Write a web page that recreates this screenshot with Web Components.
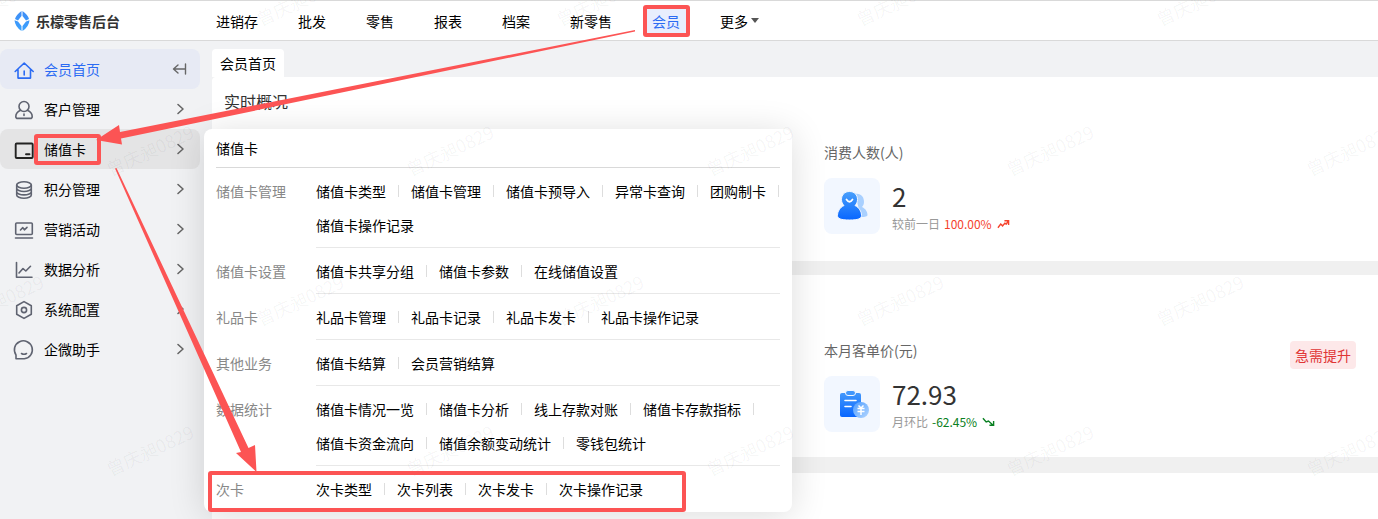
<!DOCTYPE html>
<html lang="zh-CN">
<head>
<meta charset="utf-8">
<title>乐檬零售后台</title>
<style>
html,body{margin:0;height:100%}
body{font:14px/22px "Noto Sans CJK SC","Noto Sans",sans-serif;color:#000;background:#f1f2f4;overflow:hidden}
</style>
</head>
<body>
<retail-app></retail-app>
<script>
function define(name, html, setup) {
  const t = document.createElement('template');
  t.innerHTML = html;
  customElements.define(name, class extends HTMLElement {
    constructor() {
      super();
      this.attachShadow({mode: 'open'}).append(t.content.cloneNode(true));
    }
    connectedCallback() { if (setup) setup(this, this.shadowRoot); }
  });
}

const ICONS = {
  home: '<path d="M5 10.500v8.600h12.500v-8.600M2.200 12.500 11.200 4l9 8.500M11.200 12v4" />',
  user: '<circle cx="11" cy="7.500" r="5"/><path d="M7.700 11.300C4.300 12.800 2.800 15 2.800 17.400c0 1.200.7 2 2 2h12.400c1.300 0 2-.8 2-2 0-2.400-1.500-4.600-4.900-6.100M11 15v1.500"/>',
  card: '<rect x="2.700" y="4.500" width="17" height="14.500" rx="1" stroke-width="1.900"/><path d="M13 15.300h3.500" stroke-width="1.900"/>',
  coins: '<ellipse cx="11" cy="6" rx="7.300" ry="3.200"/><path d="M3.700 6v10c0 1.800 3.300 3.200 7.300 3.200s7.300-1.400 7.300-3.200V6M3.700 9.300c0 1.800 3.300 3.200 7.300 3.200s7.300-1.400 7.300-3.200M3.700 12.700c0 1.800 3.300 3.200 7.300 3.200s7.300-1.400 7.300-3.200"/>',
  screen: '<rect x="2.700" y="4" width="16.600" height="11.500" rx="1"/><path d="M2.500 19h17M7.500 11l2.300-2.400 1.600 2.200L14 8.300"/>',
  chart: '<path d="M3.500 3.500v14.700h15.500M6 14l4-4.500 2.800 2.500 4.700-4.700"/>',
  hex: '<path d="M11 2.600 18.300 6.800v8.400L11 19.400 3.700 15.200V6.800Z"/><circle cx="11" cy="11" r="2.600"/>',
  chat: '<path d="M3 19.800V16a9 9 0 1 1 8.300 3.800H3M8.500 14.500c1.600 1 3.400 1 5 0"/>'
};

define('brand-logo', `
<style>
:host{display:flex;align-items:center;gap:6px;color:#333;font-weight:700}
svg{width:16px;height:20px}
</style>
<svg viewBox="0 0 16 20" aria-hidden="true"><defs><linearGradient id="g" x1="0" y1="0" x2="0" y2="1"><stop offset="0" stop-color="#3f8cf5"/><stop offset="1" stop-color="#3aa2ff"/></linearGradient></defs>
<path fill="url(#g)" d="M7.500 0v5L4 9.500 1 8Q2 4 7.500 0ZM8.500 0v5L12 9.500 15 8Q14 4 8.500 0ZM.5 9.200 4 10.500 7.500 15v5Q1 15.500.5 9.200ZM15.500 9.200 12 10.500 8.500 15v5q6.500-4.500 7-10.800Z"/></svg>
<slot></slot>`);

define('top-bar', `
<style>
:host{display:flex;align-items:center;box-sizing:border-box;height:41px;background:#fff;border-top:1px solid #d9d9d9;border-bottom:1px solid #d9d9d9}
brand-logo{flex:0 0 192px;padding-left:14px;box-sizing:border-box}
nav{display:flex;gap:28px;padding-left:18px}
a{display:flex;align-items:center;padding:2px 6px;color:#000;text-decoration:none;white-space:nowrap}
a[aria-current]{color:#2b6bf3;background:#e8eefd}
i{margin-left:3px;border:4px solid transparent;border-top:5px solid #555;border-bottom:0}
</style>
<brand-logo>乐檬零售后台</brand-logo><nav></nav>`, (el, root) => {
  root.querySelector('nav').innerHTML = ['进销存','批发','零售','报表','档案','新零售','会员','更多'].map(n =>
    `<a href="#"${n === '会员' ? ' aria-current="page"' : ''}>${n}${n === '更多' ? '<i></i>' : ''}</a>`).join('');
});

define('side-item', `
<style>
:host{display:block}
a{display:flex;align-items:center;height:40px;padding:0 12px;border-radius:8px;color:#000;text-decoration:none}
svg{fill:none;stroke:#5f6370;stroke-width:1.600;stroke-linecap:round;stroke-linejoin:round}
.icon{width:24px;height:24px;margin-right:8px}
.more{width:16px;height:16px;margin-left:auto;stroke:#666}
:host([active]) a{background:#e7eaf4;color:#2b6bf3}
:host([active]) .icon{stroke:#2b6bf3}
:host([open]) a{background:#e4e4e5}
:host([open]) .icon{stroke:#222}
</style>
<a href="#"><svg class="icon" viewBox="-1 -2 24 24" aria-hidden="true"></svg><slot></slot><svg class="more" viewBox="0 0 16 16" aria-hidden="true"></svg></a>`, (el, root) => {
  root.querySelector('.icon').innerHTML = ICONS[el.getAttribute('icon')];
  root.querySelector('.more').innerHTML = el.hasAttribute('active')
    ? '<path d="M13.500 3v10M1.500 8h12M6 4l-4.500 4L6 12" stroke-width="1.400"/>' : '<path d="M6 3.500l5 4.500-5 4.500"/>';
});

define('side-menu', `
<style>:host{display:block;flex:0 0 200px}nav{display:block}</style>
<nav>
<side-item icon="home" active>会员首页</side-item>
<side-item icon="user">客户管理</side-item>
<side-item icon="card" open>储值卡</side-item>
<side-item icon="coins">积分管理</side-item>
<side-item icon="screen">营销活动</side-item>
<side-item icon="chart">数据分析</side-item>
<side-item icon="hex">系统配置</side-item>
<side-item icon="chat">企微助手</side-item>
</nav>`);

define('menu-group', `
<style>
:host{display:flex}
h3{flex:0 0 100px;margin:0;padding-top:6px;font:inherit;line-height:34px;color:#888}
div{flex:1;min-width:0;padding:6px 0 5px;border-bottom:1px solid #e8e8e8}
:host(:last-of-type) div{border-color:transparent}
ul{display:flex;flex-wrap:wrap;list-style:none;margin:0 -12px 0 0;padding:0}
li{display:flex;align-items:center;height:34px}
li:not(:last-child)::after{content:"";width:1px;height:12px;margin:0 12px;background:#ddd}
a{color:#000;text-decoration:none;white-space:nowrap}
</style>
<h3></h3><div><ul></ul></div>`, (el, root) => {
  root.querySelector('h3').textContent = el.getAttribute('label');
  root.querySelector('ul').innerHTML = el.getAttribute('items').split(' ').map(n => `<li><a href="#">${n}</a></li>`).join('');
});

define('mega-menu', `
<style>
:host{display:block;box-sizing:border-box;width:588px;padding:0 12px;background:#fff;border-radius:8px;box-shadow:0 4px 36px rgba(0,0,0,.14)}
h2{margin:0;font:inherit;line-height:38px;border-bottom:1px solid #d9d9d9}
</style>
<h2>储值卡</h2>
<menu-group label="储值卡管理" items="储值卡类型 储值卡管理 储值卡预导入 异常卡查询 团购制卡 储值卡操作记录"></menu-group>
<menu-group label="储值卡设置" items="储值卡共享分组 储值卡参数 在线储值设置"></menu-group>
<menu-group label="礼品卡" items="礼品卡管理 礼品卡记录 礼品卡发卡 礼品卡操作记录"></menu-group>
<menu-group label="其他业务" items="储值卡结算 会员营销结算"></menu-group>
<menu-group label="数据统计" items="储值卡情况一览 储值卡分析 线上存款对账 储值卡存款指标 储值卡资金流向 储值余额变动统计 零钱包统计"></menu-group>
<menu-group label="次卡" items="次卡类型 次卡列表 次卡发卡 次卡操作记录"></menu-group>`);

define('stat-card', `
<style>
:host{display:block;--trend:#f5432d}
:host([down]){--trend:#0a8022}
.name{color:#666;margin-bottom:15px}
.row{display:flex;gap:12px}
.pic{width:56px;height:56px;border-radius:8px;background:#f2f7ff}
.value{font-size:26px;line-height:36px;color:#333}
.sub{display:flex;align-items:center;font-size:12px;line-height:20px;color:#999}
b{font-weight:400;color:var(--trend);margin:0 5px 0 4px}
.trend{width:13px;height:10px;fill:none;stroke:var(--trend);stroke-width:1.500}
</style>
<div class="name"><slot></slot></div>
<div class="row"><div class="pic"><slot name="icon"></slot></div>
<div><div class="value"></div><div class="sub"><span></span><b></b>
<svg class="trend" viewBox="0 0 14 10" aria-hidden="true"></svg></div></div></div>`, (el, root) => {
  const q = s => root.querySelector(s);
  q('.value').textContent = el.getAttribute('value');
  q('.sub span').textContent = el.getAttribute('period');
  q('.sub b').textContent = el.getAttribute('change');
  q('.trend').innerHTML = el.hasAttribute('down')
    ? '<path d="M1 1l3.500 4 2.500-1 5 4.500M12.500 4v4.500H8"/>' : '<path d="M1 9l3-4 2 2 2.500-3 1.500 1 2.500-3.500M8 1.500h4.500V6"/>';
});

define('overview-panel', `
<style>
:host{display:block;background:#fff;padding:0 22px 0 12px}
.grid{display:grid;grid-template-columns:53% 1fr auto;align-items:start}
.grid ::slotted(stat-card){grid-column:2}
</style>
<slot name="title"></slot><div class="grid"><slot></slot></div>`);

define('member-home', `
<style>
:host{display:flex;flex-direction:column;flex:1;min-width:0;margin-left:12px}
.tab{align-self:flex-start;box-sizing:border-box;height:28px;padding:3px 8px;border:0;border-radius:4px 4px 0 0;background:#fff;font:inherit;color:#000}
main{flex:1;display:flex;flex-direction:column;background:#f0f0f0;border-radius:4px 0 0 0;overflow:hidden}
.first{padding-top:12px;padding-bottom:27px;margin-bottom:14px}
.second{padding-top:64px;padding-bottom:25px;margin-bottom:16px}
.rest{flex:1}
h1{margin:0 0 28px;font:inherit;font-size:16px;line-height:24px;color:#333}
.tag{grid-column:3;padding:3px 5px;margin-top:2px;border-radius:4px;background:#fde8e9;color:#e03535}
svg{display:block;width:56px;height:56px}
</style>
<button class="tab">会员首页</button>
<main>
<overview-panel class="first"><h1 slot="title">实时概况</h1>
<stat-card value="2" period="较前一日" change="100.00%">消费人数(人)
<svg slot="icon" viewBox="0 0 56 56" aria-hidden="true"><defs><linearGradient id="b" x1="0" y1="0" x2="0" y2="1"><stop offset="0" stop-color="#4aa0fb"/><stop offset="1" stop-color="#0866ff"/></linearGradient></defs>
<path fill="#a9d0ff" d="M31 16c6-1 9 3 9 8 0 2-1 4-2 5 4 2 5.500 5 5.500 8q0 2-6.500 2Z"/>
<path stroke="#f2f7ff" fill="url(#b)" d="M25.500 13.500c-5 0-8 3.500-8 8 0 2.500 1 4.500 2.500 6-4 2-6.500 6-6.500 10 0 3 3 4.500 12 4.500s12-1.500 12-4.500c0-4-2.500-8-6.500-10 1.500-1.500 2.500-3.500 2.500-6 0-4.500-3-8-8-8Z"/>
<path d="M22.500 21.500q3 4.500 6 0" fill="none" stroke="#fff" stroke-width="1.800" stroke-linecap="round"/></svg>
</stat-card></overview-panel>
<overview-panel class="second">
<stat-card down value="72.93" period="月环比" change="-62.45%">本月客单价(元)
<svg slot="icon" viewBox="0 0 56 56" aria-hidden="true"><defs><linearGradient id="c" x1="0" y1="0" x2="0" y2="1"><stop offset="0" stop-color="#4297fb"/><stop offset="1" stop-color="#0866ff"/></linearGradient><linearGradient id="d" x1="0" y1="0" x2="1" y2="1"><stop offset="0" stop-color="#4e9dff"/><stop offset="1" stop-color="#b5d7ff"/></linearGradient></defs>
<rect x="16" y="17" width="21" height="24" rx="2" fill="url(#c)"/><rect x="21.500" y="14.500" width="10" height="5" rx="2.500" fill="#4297fb" stroke="#f2f7ff"/>
<path d="M21 24.500h11M21 30.500h6" stroke="#fff" stroke-width="1.600" stroke-linecap="round"/>
<circle cx="37" cy="34" r="8" fill="url(#d)"/><path d="M34.500 29.500 37 32l2.500-2.500M33.500 32.500h7M33.500 35.500h7M37 32v7" fill="none" stroke="#fff" stroke-width="1.500"/></svg>
</stat-card><span class="tag">急需提升</span></overview-panel>
<overview-panel class="rest"></overview-panel>
</main>`);

define('water-mark', `
<style>
:host{position:absolute;inset:0;overflow:hidden;pointer-events:none}
svg{display:block;width:100%;height:100%}
text{font-size:18px;fill:#000;fill-opacity:.045;text-anchor:middle}
</style><svg aria-hidden="true"></svg>`, (el, root) => {
  let out = '';
  for (let row = 0; row < 4; row++)
    for (let x = row % 2 ? 156 : 6; x < innerWidth + 60; x += 300)
      out += `<text transform="translate(${x - 3} ${row * 150 + 7}) rotate(-25)">曾庆昶0829</text>`;
  root.querySelector('svg').innerHTML = out;
});

define('guide-marks', `
<style>
:host{position:absolute;inset:0;pointer-events:none}
svg{display:block;width:100%;height:100%}
rect{fill:none;stroke:#fc5454;stroke-width:4}
path{fill:#fc5454}
</style>
<svg aria-hidden="true">
<rect x="645" y="7" width="43" height="28" rx="1"/>
<rect x="36" y="136" width="63" height="27" rx="1"/>
<rect x="210" y="473" width="474" height="37" rx="1"/>
<path d="M635 30 120 132 119 125 96 140 122 144.500 121 138.500 635 31.500Z"/>
<path d="M115 168.500 241 452 236 453 256.500 472 255 445 248.500 448 116.500 168Z"/>
</svg>`);

define('retail-app', `
<style>
:host{position:relative;display:flex;flex-direction:column;min-height:100vh}
.body{flex:1;display:flex;padding-top:8px}
mega-menu{position:absolute;left:204px;top:129px}
</style>
<top-bar></top-bar>
<div class="body"><side-menu></side-menu><member-home></member-home></div>
<mega-menu></mega-menu>
<water-mark></water-mark>
<guide-marks></guide-marks>`);
</script>
</body>
</html>
